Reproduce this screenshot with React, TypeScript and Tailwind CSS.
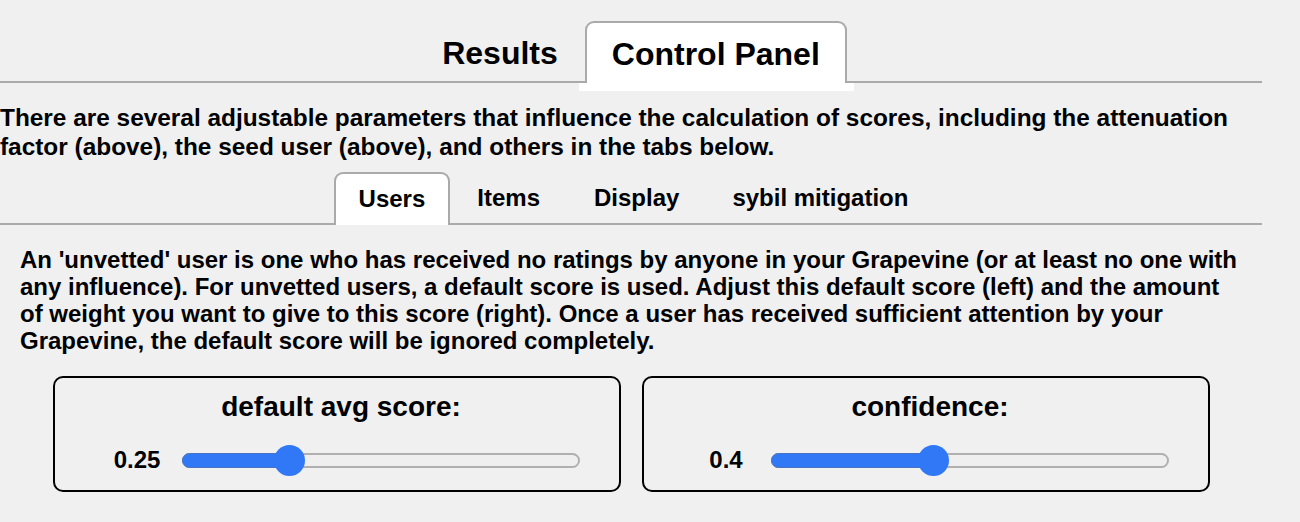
import React from "react";

function Slider({ value }: { value: number }) {
  return (
    <div className="flex-1 h-[32px] flex items-center">
      <div className="relative w-full h-[15px]">
        <div className="absolute inset-0 rounded-full bg-[#efefef] border-2 border-[#b0b0b0]" />
        <div
          className="absolute left-0 top-0 bottom-0 rounded-full bg-[#3078f5] border-[1.5px] border-[#4a72c2]"
          style={{ width: `calc(15px + ${value} * (100% - 30px))` }}
        />
        <div
          className="absolute top-1/2 w-[31px] h-[31px] -mt-[15.5px] -ml-[15.5px] rounded-full bg-[#3078f5]"
          style={{ left: `calc(15px + ${value} * (100% - 30px))` }}
        />
      </div>
    </div>
  );
}

function Box({ title, value, display }: { title: string; value: number; display: string }) {
  return (
    <div className="h-[116px] border-2 border-black rounded-[10px] flex flex-col">
      <div className="h-[34px] mt-[12px] text-center text-[28px] leading-[34px] pl-[8px]">{title}</div>
      <div className="mt-[20px] flex items-center pr-[39px]">
        <div className="ml-[37px] w-[90px] text-center text-[24px] leading-[32px]">{display}</div>
        <Slider value={value} />
      </div>
    </div>
  );
}

export default function App() {
  return (
    <div
      className="w-[1300px] h-[522px] bg-[#f0f0f0] text-black font-bold overflow-hidden"
      style={{ fontFamily: '"Liberation Sans", Arial, Helvetica, sans-serif' }}
    >
      <div className="w-[1262px]">
        {/* top tabs */}
        <div className="flex justify-center items-end pt-[21px] border-b-2 border-[#aaaaaa] h-[83px]">
          <div className="h-[60px] px-[27px] flex items-center pt-[3px] text-[32px] leading-[38px]">Results</div>
          <div className="flex flex-col mb-[-10px]">
            <div className="h-[62px] px-[25px] flex items-center pt-[1px] text-[32px] leading-[38px] bg-white border-2 border-b-0 border-[#aaaaaa] rounded-t-[9px]">
              Control Panel
            </div>
            <div className="h-[8px] ml-[-6px] mr-[-7px] bg-white" />
          </div>
        </div>

        <p className="mt-[20px] text-[24.4px] leading-[29px]">
          There are several adjustable parameters that influence the calculation of scores, including the attenuation
          factor (above), the seed user (above), and others in the tabs below.
        </p>

        {/* sub tabs */}
        <div className="mt-[11px] pl-[6px] flex justify-center items-end border-b-2 border-[#aaaaaa] h-[53px]">
          <div className="h-[53px] mb-[-2px] pb-[2px] px-[23px] flex items-center text-[24px] leading-[30px] bg-white border-2 border-b-0 border-[#aaaaaa] rounded-t-[9px]">
            Users
          </div>
          <div className="h-[51px] px-[27px] flex items-center text-[24px] leading-[30px]">Items</div>
          <div className="h-[51px] px-[27px] flex items-center text-[24px] leading-[30px]">Display</div>
          <div className="h-[51px] px-[26px] flex items-center text-[24px] leading-[30px]">sybil mitigation</div>
        </div>

        <p className="mt-[21px] ml-[20px] w-[1222px] text-[24px] leading-[27px]">
          An 'unvetted' user is one who has received no ratings by anyone in your Grapevine (or at least no one with
          any influence). For unvetted users, a default score is used. Adjust this default score (left) and the amount
          of weight you want to give to this score (right). Once a user has received sufficient attention by your
          Grapevine, the default score will be ignored completely.
        </p>

        <div className="mt-[22px] ml-[53px] w-[1157px] grid grid-cols-2 gap-[21px]">
          <Box title="default avg score:" value={0.25} display="0.25" />
          <Box title="confidence:" value={0.4} display="0.4" />
        </div>
      </div>
    </div>
  );
}
